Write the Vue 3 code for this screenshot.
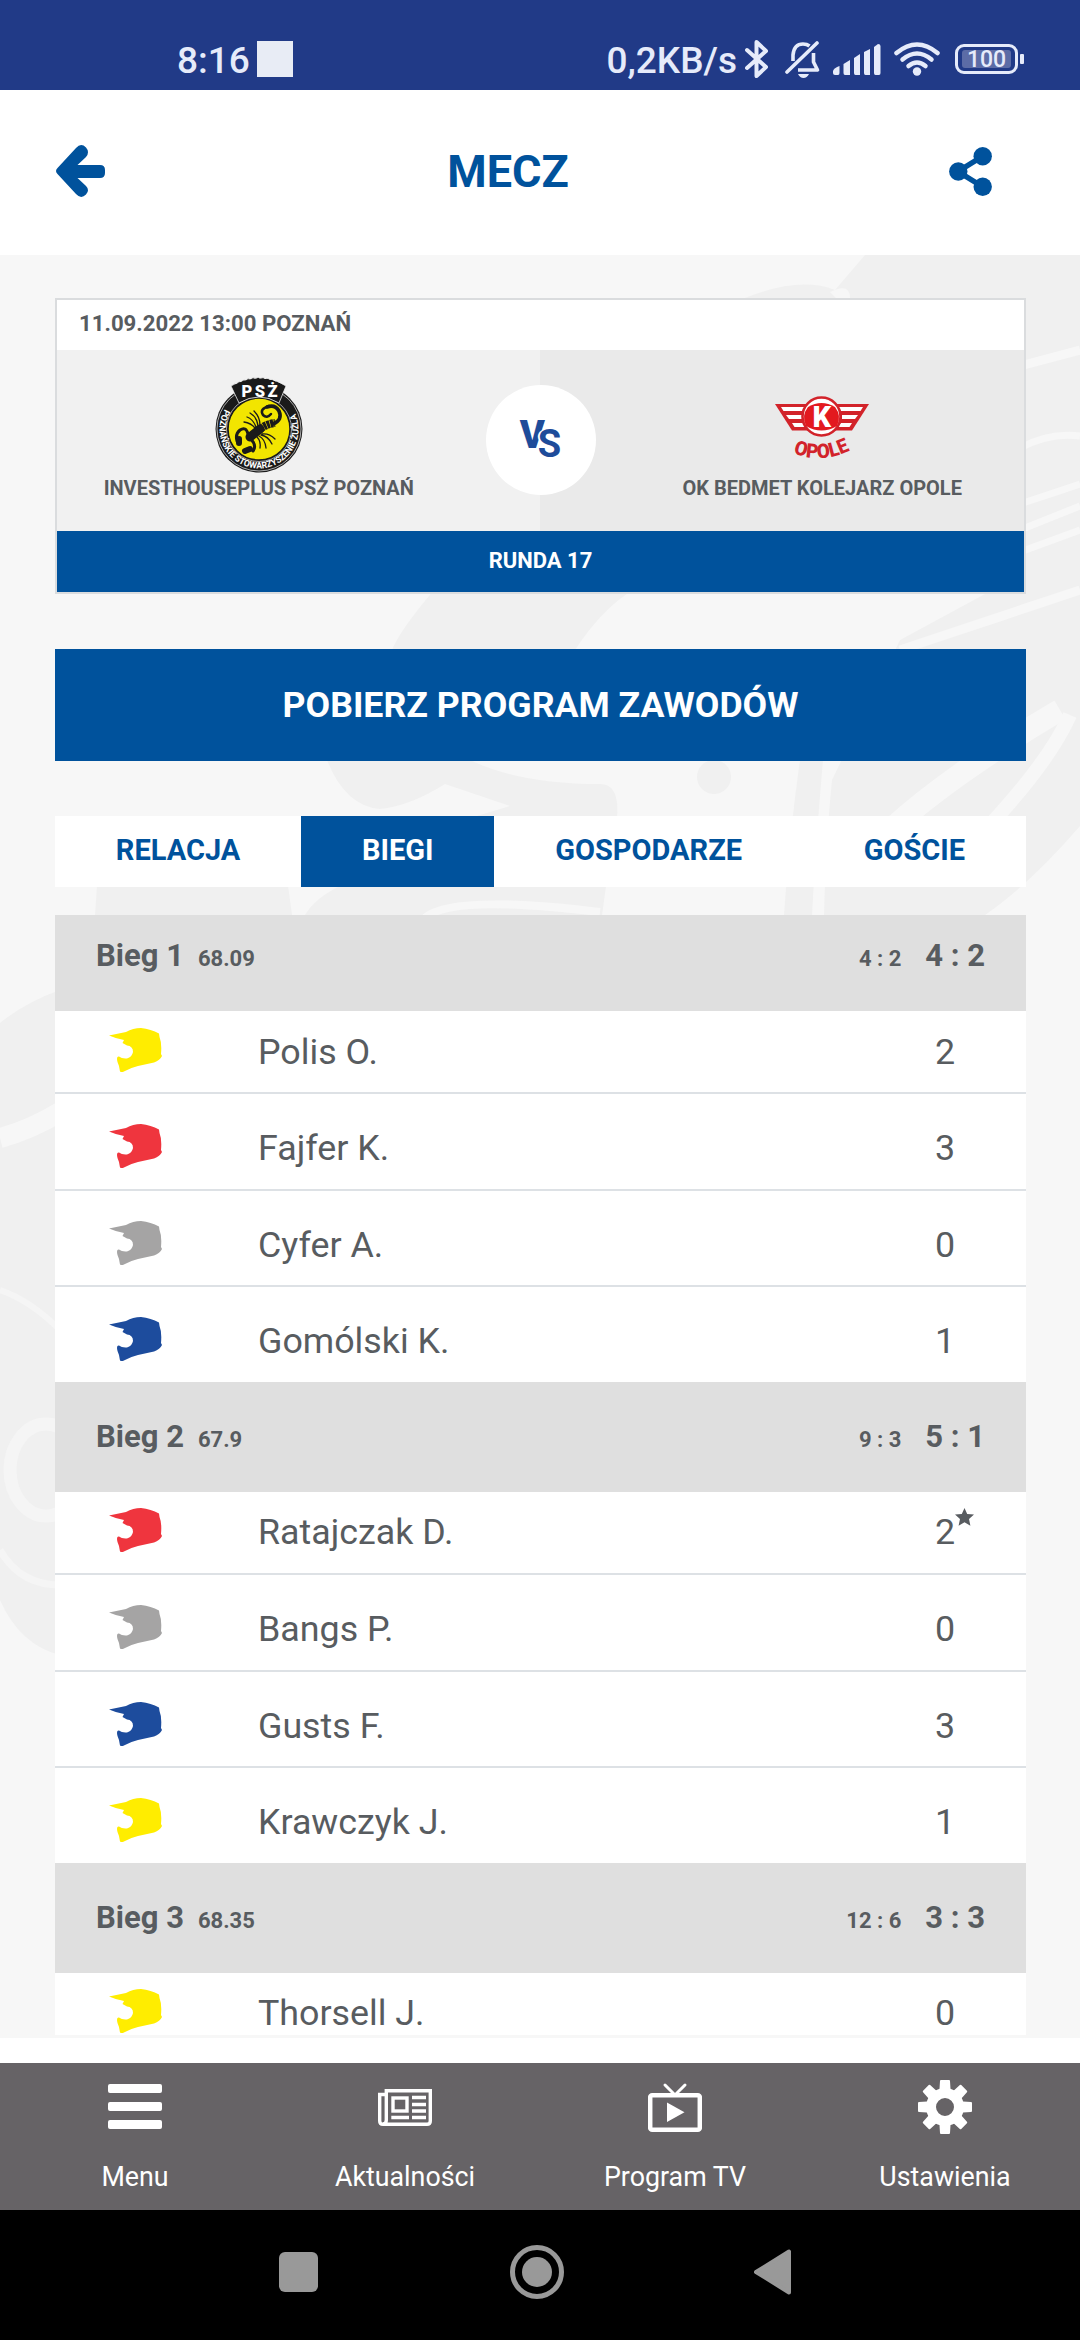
<template>
  <div class="screen">
    <!-- System status bar -->
    <div class="status-bar">
      <div class="status-left">
        <span class="clock">8:16</span>
        <span class="notification"></span>
      </div>
      <div class="status-right">
        <span class="speed">0,2KB/s</span>
        <svg class="bluetooth" viewBox="0 0 24 38" fill="none" stroke="currentColor" stroke-width="4" stroke-linejoin="round" stroke-linecap="round">
          <path d="M2 10 L21 27 L11.500 36 V2 L21 11 L2 28" />
        </svg>
        <svg class="bell" viewBox="0 0 36 38" fill="none" stroke="currentColor" stroke-width="3.600">
          <path d="M8 21 V15 Q9 4 18 4 Q22 4 24.500 6" />
          <path d="M28.500 13 V22 L32.500 30 H13" stroke-linejoin="round" />
          <path d="M2 32 L32 3" stroke-linecap="round" />
          <path d="M13 34 H24 Q22 38 18.500 38 Q15 38 13 34 Z" fill="currentColor" stroke="none" />
        </svg>
        <svg class="signal" viewBox="0 0 48 31" fill="currentColor">
          <path d="M0 27 Q1 24 6.500 22 V29 Q6.500 31 5 31 H2 Q0 31 0 29 Z" />
          <path d="M10.500 20 L17 16 V31 H12 Q10.500 31 10.500 29 Z" />
          <path d="M21 14 L27 10 V31 H22.500 Q21 31 21 29 Z" />
          <path d="M31 8 L37 5 V31 H32.500 Q31 31 31 29 Z" />
          <path d="M41 3 L45 0 Q47.500 0 47.500 2 V29 Q47.500 31 46 31 H42.500 Q41 31 41 29 Z" />
        </svg>
        <svg class="wifi" viewBox="0 0 46 34" fill="none" stroke="currentColor" stroke-width="4.500" stroke-linecap="round">
          <path d="M2.500 11 Q23 -6 43.500 11" />
          <path d="M8.500 17.500 Q23 5.500 37.500 17.500" />
          <path d="M14.500 24 Q23 17 31.500 24" />
          <circle cx="23" cy="29.500" r="4.200" fill="currentColor" stroke="none" />
        </svg>
        <div class="battery"><span>100</span></div>
      </div>
    </div>

    <!-- App header -->
    <header>
      <svg class="back" viewBox="0 0 49 52" fill="currentColor">
        <path d="M1.500 23 L20 3 Q25 -2.500 30 2.500 Q34 7 30 12 L21.500 20 H44 Q49 20 49 25 V28 Q49 33 44 33 H21.500 L30 41 Q34 45 30 49.500 Q25 54.500 20 49 L1.500 29 Q-1.500 26 1.500 23 Z" />
      </svg>
      <h1>MECZ</h1>
      <svg class="share" viewBox="0 0 43 49" fill="currentColor">
        <path d="M34 9 L9 24.500 L34 40" fill="none" stroke="currentColor" stroke-width="5.500" />
        <circle cx="9.300" cy="24.500" r="9.200" />
        <circle cx="33.700" cy="9.200" r="9.200" />
        <circle cx="33.700" cy="39.800" r="9.200" />
      </svg>
    </header>

    <main>
      <!-- Rider watermark behind the content -->
      <svg class="watermark" viewBox="0 255 1080 1783" preserveAspectRatio="none">
        <g fill="#f0f0f0">
          <path d="M865 255 H1080 V826 Q1030 884 985 915 H824 Q826 840 832 780 L900 640 L985 594 L860 298 H745 Q800 276 835 290 Z" />
          <path d="M434 590 Q400 630 392 650 H575 Q600 612 627 594 Z" />
          <path d="M327 760 Q345 806 380 809 Q410 806 445 784 L510 806 L470 818 H617 Q620 784 600 784 Q520 784 470 760 Z" />
          <path d="M97 886 H288 L292 915 H95 Z" />
          <path d="M340 886 Q315 898 305 915 H602 L606 886 Z" />
          <path d="M800 760 Q790 830 784 915 H812 Q816 840 823 760 Z" />
          <circle cx="714" cy="777" r="17" />
          <path d="M0 1023 Q26 1002 60 990 V1655 Q20 1645 0 1600 Z" />
        </g>
        <g fill="none" stroke="#f7f7f7">
          <path d="M0 1138 Q30 1130 60 1112" stroke-width="20" />
          <path d="M425 918 Q450 894 600 912" stroke-width="8" />
          <path d="M1020 366 L1080 350" stroke-width="9" />
          <path d="M1020 448 Q1050 432 1080 436 M1020 504 L1080 484 M1020 530 L1080 506 M1020 552 L1080 530" stroke-width="7" />
          <path d="M890 830 Q950 775 1060 710" stroke-width="22" />
          <path d="M990 825 Q1050 760 1070 715" stroke-width="14" />
          <path d="M900 650 L1080 590" stroke-width="9" />
        </g>
        <g fill="none" stroke="#f5f5f5">
          <path d="M0 1290 Q30 1300 60 1330" stroke-width="6" />
          <ellipse cx="46" cy="1470" rx="36" ry="46" stroke-width="13" />
          <path d="M0 1550 Q20 1585 60 1585" stroke-width="7" />
        </g>
        <path d="M830 292 Q850 282 850 298 H836 Z" fill="#f7f7f7" />
      </svg>

      <!-- Match card -->
      <section class="match">
        <div class="match-date">11.09.2022 13:00 POZNAŃ</div>
        <div class="teams">
          <div class="team">
            <svg class="logo-psz" viewBox="0 0 88 96">
              <defs>
                <path id="ring-text" d="M9.800 32.200 A39.500 39.500 0 1 0 78.200 32.200" />
              </defs>
              <circle cx="44" cy="52" r="43.500" fill="#1a1a1a" />
              <circle cx="44" cy="52" r="42" fill="none" stroke="#e8e8e8" stroke-width="0.700" />
              <circle cx="44" cy="52" r="31" fill="#f2e500" stroke="#1a1a1a" stroke-width="1.500" />
              <circle cx="44" cy="52" r="32.500" fill="none" stroke="#ddd" stroke-width="0.700" />
              <path d="M16 9 Q44 -8 71 9 L64 26 Q44 14 24 26 Z" fill="#1a1a1a" stroke="#f0f0f0" stroke-width="0.800" />
              <path d="M20 6.500 Q44 -5 68 6.500" fill="none" stroke="#eee" stroke-width="1.600" stroke-dasharray="2.500 2.500" />
              <text x="44.500" y="19.500" text-anchor="middle" class="psz-name" textLength="36">PSŻ</text>
              <text class="psz-ring">
                <textPath href="#ring-text" textLength="160" lengthAdjust="spacingAndGlyphs">POZNAŃSKIE STOWARZYSZENIE ŻUŻLA</textPath>
              </text>
              <!-- scorpion -->
              <g fill="none" stroke="#1a1a1a" stroke-linecap="round">
                <path d="M43 54 Q50 47 60 46" stroke-width="8" stroke-dasharray="3 0.600" stroke-linecap="butt" />
                <path d="M58 47 Q68 43 64 34 Q60 27 52 30" stroke-width="3.600" />
                <path d="M54 29 Q44 32 48 38 Q52 42 56 37" stroke-width="2.500" />
                <path d="M35 60 L45 52" stroke-width="9" />
                <path d="M33 57 Q31 49 25 53 Q20 57 22 64 M36 62 Q42 69 38 74" stroke-width="3" />
                <path d="M24 62 V66 M30 74 L35 72" stroke-width="6" />
                <path d="M40 51 Q36 46 29 45 M41 50 Q38 42 32 40 M43 49 Q42 40 35 36 M45 48 Q45 40 39 34" stroke-width="1.300" />
                <path d="M47 57 Q54 56 60 62 M46 58 Q53 59 57 67 M44 59 Q50 62 51 71 M42 60 Q46 64 45 71" stroke-width="1.300" />
              </g>
            </svg>
            <div class="team-name">INVESTHOUSEPLUS PSŻ POZNAŃ</div>
          </div>
          <div class="versus"><span class="v">V</span><span class="s">S</span></div>
          <div class="team">
            <svg class="logo-opole" viewBox="0 0 94 96">
              <defs>
                <path id="opole-text" d="M18 76 Q47 88 78 72" />
              </defs>
              <path d="M0 27 H94 L77 53.500 H17 Z" fill="#d2232a" />
              <path d="M6 30 H32 L28 34 H8.500 Z M11 38 H27 V42 H14 Z M17 46 H28 L32 50 H19.500 Z M88 30 H62 L66 34 H85.500 Z M83 38 H67 V42 H80 Z M77 46 H66 L62 50 H74.500 Z" fill="#fff" />
              <circle cx="46.500" cy="39.500" r="19" fill="#fff" stroke="#d2232a" stroke-width="2.600" />
              <path d="M33 30 Q46.500 22 60 30 Q67 39 62 49 Q46.500 58 31 49 Q26 39 33 30 Z" fill="#e3191f" />
              <text x="46.800" y="50" text-anchor="middle" class="opole-k">K</text>
              <text class="opole-name">
                <textPath href="#opole-text" textLength="59" lengthAdjust="spacingAndGlyphs">OPOLE</textPath>
              </text>
            </svg>
            <div class="team-name">OK BEDMET KOLEJARZ OPOLE</div>
          </div>
        </div>
        <div class="round">RUNDA 17</div>
      </section>

      <button class="download">POBIERZ PROGRAM ZAWODÓW</button>

      <!-- Tabs -->
      <nav class="tabs">
        <a v-for="tab in tabs" :key="tab" :class="{ active: tab === activeTab }" @click="activeTab = tab">{{ tab }}</a>
      </nav>

      <!-- Heats -->
      <section class="heats">
        <div v-for="heat in heats" :key="heat.id" class="heat">
          <div class="heat-head">
            <span class="heat-name">Bieg {{ heat.id }}</span>
            <span class="heat-time">{{ heat.time }}</span>
            <span class="heat-total">{{ heat.total }}</span>
            <span class="heat-score">{{ heat.score }}</span>
          </div>
          <div v-for="rider in heat.riders" :key="rider.name" class="rider">
            <svg class="helmet" :class="rider.helmet" viewBox="0 0 53 44" fill="currentColor">
              <path d="M0 7.500 L17 4 Q24 0 32 0 Q42 1 50 5.500 L50.500 9 Q53 15 52 26 L53 28 Q51 32 45 34.500 L29 38 Q21 40 16 43 Q13 45 11 43.500 Q10.500 38 8.500 34 Q7 28 10 28.500 Q13 31 18 30.500 Q23 29 24 24 Q24 18 18 17.500 L13.500 15 L15 12 Q8 11 0 7.500 Z" />
            </svg>
            <span class="rider-name">{{ rider.name }}</span>
            <span class="points">
              {{ rider.points }}
              <svg v-if="rider.bonus" class="star" viewBox="0 0 19 18" fill="currentColor">
                <path d="M9.500 0 L12.200 6 L19 6.600 L14 11 L15.400 17.700 L9.500 14.300 L3.600 17.700 L5 11 L0 6.600 L6.800 6 Z" />
              </svg>
            </span>
          </div>
        </div>
      </section>
    </main>

    <!-- Bottom menu -->
    <nav class="bottom-menu">
      <div class="menu-item">
        <svg viewBox="0 0 54 54" fill="currentColor">
          <rect y="4" width="54" height="9" rx="2" />
          <rect y="22" width="54" height="9" rx="2" />
          <rect y="40" width="54" height="9" rx="2" />
        </svg>
        <span>Menu</span>
      </div>
      <div class="menu-item">
        <svg viewBox="0 0 54 54" fill="none" stroke="currentColor" stroke-width="3.400">
          <path d="M8 10.700 H52.300 V41 Q52.300 44.300 49 44.300 H5 Q1.700 44.300 1.700 41 V14.500 H8 M8.300 9 V40 Q8.300 44 5 44" />
          <rect x="15" y="18" width="14" height="13" />
          <path d="M13.300 37.500 H31 M34 17.500 H48 M34 24.500 H48 M34 31 H48 M34 37.500 H48" />
        </svg>
        <span>Aktualności</span>
      </div>
      <div class="menu-item">
        <svg viewBox="0 0 54 54" fill="none" stroke="currentColor">
          <rect x="2.200" y="15.200" width="49.600" height="34.600" rx="2" stroke-width="4.500" />
          <path d="M17 5 L27 15 L37 5" stroke-width="3" stroke-linecap="round" />
          <path d="M19 22.500 V42 L36.500 32.300 Z" fill="currentColor" stroke="none" />
        </svg>
        <span>Program TV</span>
      </div>
      <div class="menu-item">
        <svg viewBox="0 0 54 54">
          <g fill="currentColor">
            <path v-for="angle in [0, 45, 90, 135, 180, 225, 270, 315]" :key="angle" d="M19 12 L21.500 9 L22 1 Q22 0 23 0 H31 Q32 0 32 1 L32.500 9 L35 12 Z" :transform="`rotate(${angle} 27 27)`" />
            <path fill-rule="evenodd" d="M27 8 A19 19 0 1 1 27 46 A19 19 0 1 1 27 8 Z M27 18 A9 9 0 1 0 27 36 A9 9 0 1 0 27 18 Z" />
          </g>
        </svg>
        <span>Ustawienia</span>
      </div>
    </nav>

    <!-- System navigation -->
    <div class="system-nav">
      <svg class="recent" viewBox="0 0 40 40"><rect width="39" height="40" rx="6" fill="#999" /></svg>
      <svg class="home" viewBox="0 0 54 54">
        <circle cx="27" cy="27" r="24.500" fill="none" stroke="#999" stroke-width="5" />
        <circle cx="27" cy="27" r="15" fill="#999" />
      </svg>
      <svg class="nav-back" viewBox="0 0 38 46">
        <path d="M2 23 L35 2.500 V43.500 Z" fill="#999" stroke="#999" stroke-width="4" stroke-linejoin="round" />
      </svg>
    </div>
  </div>
</template>

<script setup>
import { ref } from 'vue';

const tabs = ['RELACJA', 'BIEGI', 'GOSPODARZE', 'GOŚCIE'];
const activeTab = ref('BIEGI');

const heats = ref([
  {
    id: 1,
    time: '68.09',
    total: '4 : 2',
    score: '4 : 2',
    riders: [
      { name: 'Polis O.', helmet: 'yellow', points: 2 },
      { name: 'Fajfer K.', helmet: 'red', points: 3 },
      { name: 'Cyfer A.', helmet: 'white', points: 0 },
      { name: 'Gomólski K.', helmet: 'blue', points: 1 }
    ]
  },
  {
    id: 2,
    time: '67.9',
    total: '9 : 3',
    score: '5 : 1',
    riders: [
      { name: 'Ratajczak D.', helmet: 'red', points: 2, bonus: true },
      { name: 'Bangs P.', helmet: 'white', points: 0 },
      { name: 'Gusts F.', helmet: 'blue', points: 3 },
      { name: 'Krawczyk J.', helmet: 'yellow', points: 1 }
    ]
  },
  {
    id: 3,
    time: '68.35',
    total: '12 : 6',
    score: '3 : 3',
    riders: [
      { name: 'Thorsell J.', helmet: 'yellow', points: 0 }
    ]
  }
]);
</script>

<style>
body {
  margin: 0;
  background-color: #fff;
}
</style>

<style scoped>
.screen {
  display: flex;
  flex-direction: column;
  width: 1080px;
  height: 2340px;
  overflow: hidden;
  font-family: Roboto, "Liberation Sans", sans-serif;
  color: #585c60;
}

svg {
  display: block;
  flex: none;
}

/* Status bar */
.status-bar {
  display: flex;
  justify-content: space-between;
  box-sizing: border-box;
  height: 90px;
  padding: 30px 56px 0 177px;
  background-color: #213a87;
  color: #e6ebfa;
}

.status-left,
.status-right {
  display: flex;
  align-items: center;
  height: 58px;
}

.clock,
.speed {
  padding-top: 2px;
  font-size: 37px;
  font-weight: 500;
}

.clock {
  width: 80px;
}

.notification {
  width: 36px;
  height: 36px;
  background-color: #e8ecf5;
}

.speed {
  margin-right: 8px;
}

.bluetooth {
  width: 24px;
  height: 38px;
  margin-right: 16px;
}

.bell {
  width: 36px;
  height: 38px;
  margin-right: 12px;
}

.signal {
  width: 48px;
  height: 31px;
  margin-right: 13px;
}

.wifi {
  width: 46px;
  height: 34px;
  margin-right: 15px;
}

.battery {
  position: relative;
  display: flex;
  box-sizing: border-box;
  width: 63px;
  height: 30px;
  margin-right: 6px;
  padding: 3px 4px;
  border: 3px solid #e6ebfa;
  border-radius: 9px;
}

.battery span {
  flex: 1;
  border-radius: 3px;
  background-color: #5c6ca6;
  font-size: 23px;
  font-weight: 500;
  line-height: 19px;
  text-align: center;
}

.battery::after {
  content: "";
  position: absolute;
  right: -9px;
  top: 7px;
  width: 4px;
  height: 10px;
  border-radius: 1px;
  background-color: #e6ebfa;
}

/* App header */
header {
  display: flex;
  align-items: center;
  justify-content: space-between;
  box-sizing: border-box;
  height: 165px;
  padding: 0 88px 3px 56px;
  background-color: #fff;
  color: #00529c;
}

header h1 {
  margin: 0 38px 0 0;
  font-size: 45px;
  font-weight: 700;
}

.back {
  width: 49px;
  height: 52px;
}

.share {
  width: 43px;
  height: 49px;
}

/* Content */
main {
  position: relative;
  box-sizing: border-box;
  height: 1783px;
  margin-bottom: 25px;
  padding: 43px 54px 3px 55px;
  background-color: #f7f7f7;
  overflow: hidden;
}

.watermark {
  position: absolute;
  left: 0;
  top: 0;
  width: 1080px;
  height: 1783px;
}

.match,
.download,
.tabs,
.heats {
  position: relative;
}

.match {
  box-sizing: border-box;
  height: 296px;
  border: 2px solid #dadcde;
  background-color: #fff;
}

.match-date {
  height: 50px;
  padding-left: 22px;
  font-size: 22.2px;
  font-weight: 700;
  line-height: 47px;
}

.teams {
  display: flex;
  height: 181px;
  background: linear-gradient(to right, #f1f1f1 50%, #eaeaea 50%);
}

.team {
  display: flex;
  flex: 1;
  flex-direction: column;
  align-items: center;
  padding-top: 27px;
}

.team-name {
  margin-top: 3px;
  font-size: 20px;
  font-weight: 700;
  line-height: 24px;
  white-space: nowrap;
}

.logo-psz {
  width: 88px;
  height: 96px;
}

.logo-opole {
  width: 94px;
  height: 96px;
}

.psz-name {
  fill: #fff;
  font-size: 16.5px;
  font-weight: 900;
}

.psz-ring {
  fill: #fff;
  font-size: 9px;
  font-weight: 700;
}

.opole-k {
  fill: #fff;
  font-size: 29px;
  font-weight: 900;
}

.opole-name {
  fill: #d2232a;
  font-size: 20px;
  font-weight: 900;
}

.versus {
  display: flex;
  justify-content: center;
  width: 110px;
  height: 110px;
  margin: 35px 25px 0;
  border-radius: 50%;
  background-color: #fff;
  color: #1e4c9a;
  font-size: 38px;
  font-weight: 900;
}

.v {
  padding-top: 28px;
}

.s {
  margin-left: -7px;
  padding-top: 37px;
  font-weight: 700;
  text-shadow: -2px 0 0 #fff;
}

.round {
  height: 61px;
  background-color: #00529c;
  color: #fff;
  font-size: 22px;
  font-weight: 700;
  line-height: 60px;
  text-align: center;
}

.download {
  display: block;
  width: 100%;
  height: 112px;
  margin-top: 55px;
  padding: 0 0 1px;
  border: none;
  background-color: #00529c;
  color: #fff;
  font-family: inherit;
  font-size: 35.7px;
  font-weight: 700;
}

/* Tabs */
.tabs {
  display: flex;
  justify-content: space-between;
  height: 71px;
  margin-top: 55px;
  background-color: #fff;
}

.tabs a {
  flex: 1 1 auto;
  color: #00529c;
  font-size: 29px;
  font-weight: 700;
  line-height: 69px;
  text-align: center;
  cursor: pointer;
}

.tabs a.active {
  background-color: #00529c;
  color: #fff;
}

/* Heats */
.heats {
  height: 1120px;
  margin-top: 28px;
  overflow: hidden;
}

.heat {
  background-color: #fff;
}

.heat-head {
  display: flex;
  align-items: baseline;
  box-sizing: border-box;
  height: 110px;
  padding: 36px 41px 0;
  background-color: #dfdfdf;
  font-size: 31px;
  font-weight: 700;
}

.heat:first-child .heat-head {
  height: 96px;
  padding-top: 22px;
}

.heat-time {
  flex: 1;
  margin-left: 14px;
  font-size: 22px;
}

.heat-total {
  margin-right: 24px;
  font-size: 22px;
}

.rider {
  display: flex;
  align-items: flex-end;
  box-sizing: border-box;
  height: 96.7px;
  padding: 0 54px 20.5px;
  border-bottom: 2px solid #dde1e5;
}

.heat-head + .rider {
  height: 83px;
}

.rider:last-child {
  height: 94.6px;
  border-bottom: none;
}

.heat-head + .rider:last-child {
  height: 83px;
  padding-bottom: 22.5px;
}

.helmet {
  width: 53px;
  height: 44px;
}

.helmet.yellow {
  color: #ffed00;
}

.helmet.red {
  color: #ef353e;
}

.helmet.white {
  color: #a5a4a4;
}

.helmet.blue {
  color: #1d4c9d;
}

.rider-name {
  flex: 1;
  margin-bottom: 2px;
  margin-left: 94px;
  padding-left: 2px;
  font-size: 35.8px;
  line-height: 36px;
}

.points {
  position: relative;
  width: 54px;
  margin-bottom: 2px;
  font-size: 35.8px;
  line-height: 36px;
  text-align: center;
}

/* bonus point marker */
.star {
  position: absolute;
  left: 37px;
  top: -6px;
  width: 19px;
  height: 18px;
}

/* Bottom menu */
.bottom-menu {
  display: flex;
  height: 147px;
  background-color: #666366;
  color: #fff;
}

.menu-item {
  display: flex;
  flex: 1;
  flex-direction: column;
  align-items: center;
  padding-top: 17px;
  font-size: 26.8px;
}

.menu-item svg {
  width: 54px;
  height: 54px;
  margin-bottom: 27px;
}

/* System navigation */
.system-nav {
  display: flex;
  align-items: center;
  box-sizing: border-box;
  height: 130px;
  padding: 0 288px 6px 279px;
  background-color: #000;
}

.recent {
  width: 40px;
  height: 40px;
}

.home {
  width: 54px;
  height: 54px;
  margin: 0 auto;
}

.nav-back {
  width: 38px;
  height: 46px;
}
</style>
